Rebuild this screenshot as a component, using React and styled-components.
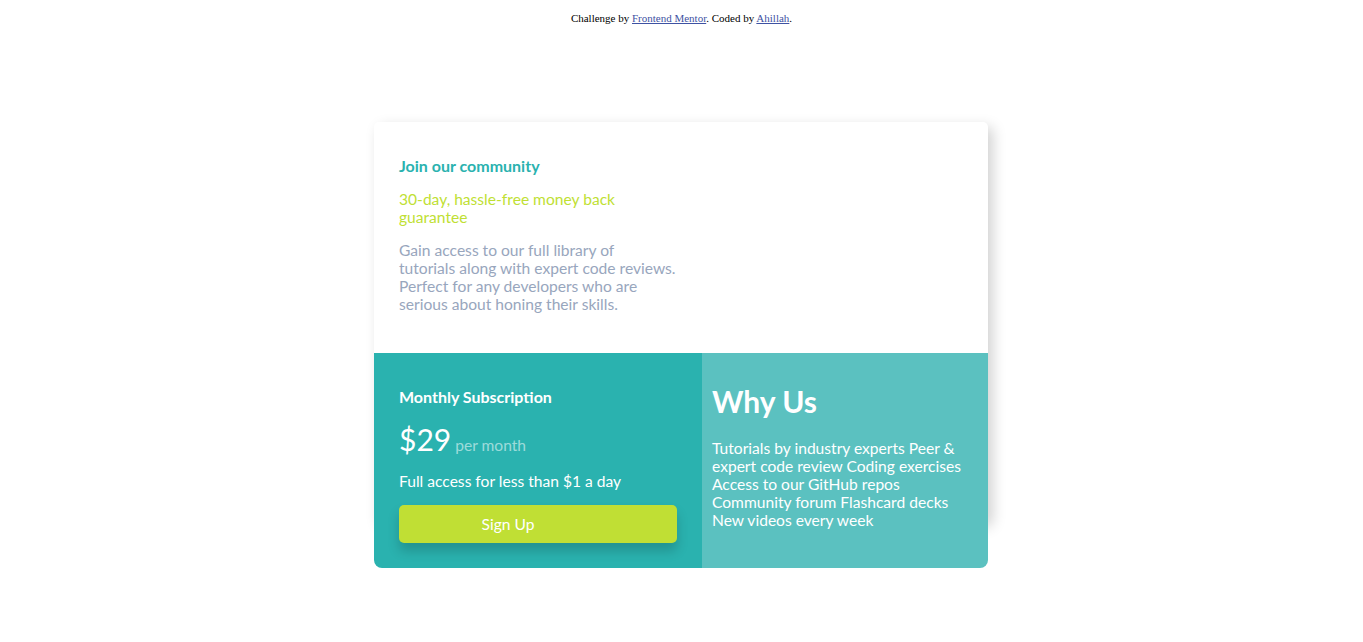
import React from 'react'
import styled, { createGlobalStyle } from 'styled-components';

const GlobalStyle = createGlobalStyle`
    body {
        margin: 0;
        background: #fff;
        font-family: "Lato", "Liberation Sans", sans-serif;
    }
`

const Page = styled.div`
    min-height: 100vh;
    display: flex;
    flex-direction: column;
    align-items: center;
`

const Attribution = styled.div`
    padding-top: 12px;
    font-family: "Liberation Serif", serif;
    font-size: 11px;
    line-height: 13px;
    color: #000;

    a {
        color: hsl(228, 45%, 44%);
    }
`

// the card box is 400px tall, the bottom row spills over it
const Card = styled.main`
    margin-top: 97px;
    margin-right: 1px;
    width: 614px;
    height: 400px;
    border-radius: 5px 5px 8px 8px;
    background: #fff;
    box-shadow: 5px 5px 14px rgba(0, 0, 0, 0.18);
`

const Top = styled.section`
    padding: 35px 25px 40px;
`

const Heading = styled.h2`
    margin: 0;
    font-size: ${props => props.size || 16}px;
    line-height: ${props => props.lh || 18}px;
    font-weight: 700;
    color: ${props => props.color || '#fff'};
`

const Text = styled.p`
    margin: ${props => props.mt || 0}px 0 0;
    width: 290px;
    font-size: 15.6px;
    line-height: 18px;
    color: ${props => props.color || '#fff'};
`

const Bottom = styled.div`
    display: grid;
    grid-template-columns: 328px 286px;
`

const Subscription = styled.section`
    padding: 35px 25px 25px;
    background: hsl(179, 62%, 43%);
    border-bottom-left-radius: 8px;
`

const Price = styled.div`
    margin-top: 17px;
    display: flex;
    align-items: baseline;
    gap: 4px;
    height: 32px;
    color: #fff;
    line-height: 32px;
`

const Amount = styled.span`
    font-size: 30px;
`

const Per = styled.span`
    font-size: 15.6px;
    line-height: 18px;
    color: rgba(255, 255, 255, 0.55);
`

const SignUp = styled.button`
    margin-top: 15px;
    width: 278px;
    height: 38px;
    padding: 0 60px 0 0;
    border: none;
    border-radius: 5px;
    background: hsl(71, 73%, 54%);
    color: #fff;
    font-family: inherit;
    font-size: 15.6px;
    text-align: center;
    box-shadow: 0 8px 12px rgba(0, 0, 0, 0.18);
    cursor: pointer;
`

const WhyUs = styled.section`
    padding: 30px 10px 0;
    background: #5bc1c0;
    border-bottom-right-radius: 8px;
`

const List = styled.ul`
    margin: 20px 0 0;
    padding: 0;
    list-style: none;
    font-size: 15.6px;
    line-height: 18px;
    color: #fff;

    li {
        display: block;
        white-space: nowrap;
    }
`

const reasons = [
    'Tutorials by industry experts Peer &',
    'expert code review Coding exercises',
    'Access to our GitHub repos',
    'Community forum Flashcard decks',
    'New videos every week',
]

export default function App() {
    return (
        <Page>
            <GlobalStyle />
            <Attribution>
                Challenge by <a href="#">Frontend Mentor</a>. Coded by <a href="#">Ahillah</a>.
            </Attribution>
            <Card>
                <Top>
                    <Heading color="hsl(179, 62%, 43%)">Join our community</Heading>
                    <Text mt={15} color="hsl(71, 73%, 54%)">
                        30-day, hassle-free money back<br />guarantee
                    </Text>
                    <Text mt={15} color="hsl(218, 22%, 67%)">
                        Gain access to our full library of<br />
                        tutorials along with expert code reviews.<br />
                        Perfect for any developers who are<br />
                        serious about honing their skills.
                    </Text>
                </Top>
                <Bottom>
                    <Subscription>
                        <Heading>Monthly Subscription</Heading>
                        <Price>
                            <Amount>$29</Amount>
                            <Per>per month</Per>
                        </Price>
                        <Text mt={17}>Full access for less than $1 a day</Text>
                        <SignUp>Sign Up</SignUp>
                    </Subscription>
                    <WhyUs>
                        <Heading size={30} lh={36}>Why Us</Heading>
                        <List>
                            {reasons.map(r => <li key={r}>{r}</li>)}
                        </List>
                    </WhyUs>
                </Bottom>
            </Card>
        </Page>
    )
}
